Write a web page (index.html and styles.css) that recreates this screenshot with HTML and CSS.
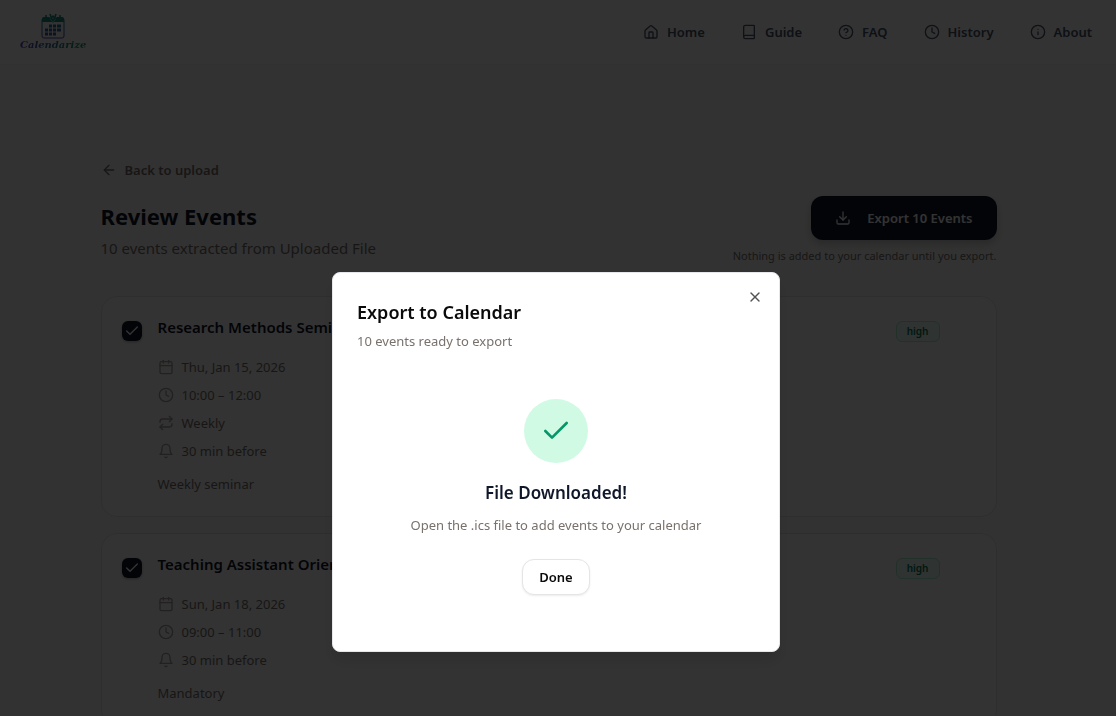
FILE: index.html
```html
<!DOCTYPE html>
<html lang="en">
<head>
  <meta charset="UTF-8" />
  <meta name="viewport" content="width=device-width, initial-scale=1.0"/>
  <title>Calendarize</title>
  <link rel="stylesheet" href="styles.css">
</head>
<body>
  <!-- ICONS -->
  <svg class="sprite" aria-hidden="true">
    <symbol id="home" viewBox="0 0 24 24"><path d="M3 10.5a2 2 0 0 1 .7-1.5l7-6a2 2 0 0 1 2.6 0l7 6a2 2 0 0 1 .7 1.500V19a2 2 0 0 1-2 2H5a2 2 0 0 1-2-2z"/><path d="M15 21v-8a1 1 0 0 0-1-1h-4a1 1 0 0 0-1 1v8"/></symbol>
    <symbol id="book" viewBox="0 0 24 24"><path d="M4 19.500v-15A2.500 2.500 0 0 1 6.500 2H19a1 1 0 0 1 1 1v18a1 1 0 0 1-1 1H6.500a1 1 0 0 1 0-5H20"/></symbol>
    <symbol id="help" viewBox="0 0 24 24"><circle cx="12" cy="12" r="10"/><path d="M9.090 9a3 3 0 0 1 5.830 1c0 2-3 3-3 3"/><path d="M12 17h.01"/></symbol>
    <symbol id="clock" viewBox="0 0 24 24"><circle cx="12" cy="12" r="10"/><path d="M12 6v6l4 2"/></symbol>
    <symbol id="info" viewBox="0 0 24 24"><circle cx="12" cy="12" r="10"/><path d="M12 16v-4"/><path d="M12 8h.01"/></symbol>
    <symbol id="arrow" viewBox="0 0 24 24"><path d="m12 19-7-7 7-7"/><path d="M19 12H5"/></symbol>
    <symbol id="download" viewBox="0 0 24 24"><path d="M12 15V3"/><path d="M21 15v4a2 2 0 0 1-2 2H5a2 2 0 0 1-2-2v-4"/><path d="m7 10 5 5 5-5"/></symbol>
    <symbol id="calendar" viewBox="0 0 24 24"><path d="M8 2v4"/><path d="M16 2v4"/><rect x="3" y="4" width="18" height="18" rx="2"/><path d="M3 10h18"/></symbol>
    <symbol id="repeat" viewBox="0 0 24 24"><path d="m17 2 4 4-4 4"/><path d="M3 11v-1a4 4 0 0 1 4-4h14"/><path d="m7 22-4-4 4-4"/><path d="M21 13v1a4 4 0 0 1-4 4H3"/></symbol>
    <symbol id="bell" viewBox="0 0 24 24"><path d="M6 8a6 6 0 0 1 12 0c0 7 3 9 3 9H3s3-2 3-9"/><path d="M10.300 21a1.940 1.940 0 0 0 3.400 0"/></symbol>
    <symbol id="check" viewBox="0 0 24 24"><path d="M20 6 9 17l-5-5"/></symbol>
    <symbol id="close" viewBox="0 0 24 24"><path d="M18 6 6 18"/><path d="m6 6 12 12"/></symbol>
  </svg>

  <header class="navbar">
    <a class="logo" href="#">
      <svg class="logo-mark" viewBox="0 0 24 26" aria-hidden="true">
        <defs>
          <linearGradient id="mark" gradientUnits="userSpaceOnUse" x1="0" y1="4" x2="0" y2="26">
            <stop offset="0" stop-color="#0d9488"/>
            <stop offset="1" stop-color="#4f46b5"/>
          </linearGradient>
        </defs>
        <rect x="1" y="5" width="22" height="20" rx="2" fill="none" stroke="url(#mark)"/>
        <path d="M1 9V6a2 2 0 0 1 2-2h5l4 6 4-6h5a2 2 0 0 1 2 2v3z" fill="#14907f"/>
        <path d="M5 2v4M19 2v4M9 1l1 3M15 1l-1 3M12 3l2 2-2 3-2-3z" fill="none" stroke="#14907f" stroke-width="1.500"/>
        <path d="M8 13h3M12 13h3M16 13h4M4 17h3M8 17h3M12 17h3M16 17h4M4 21h3M8 21h3M12 21h3" stroke="url(#mark)" stroke-width="3" fill="none"/>
      </svg>
      <span class="logo-text">Calendarize</span>
    </a>
    <nav class="nav-links">
      <a href="#"><svg class="icon"><use href="#home"/></svg>Home</a>
      <a href="#"><svg class="icon"><use href="#book"/></svg>Guide</a>
      <a href="#"><svg class="icon"><use href="#help"/></svg>FAQ</a>
      <a href="#"><svg class="icon"><use href="#clock"/></svg>History</a>
      <a href="#"><svg class="icon"><use href="#info"/></svg>About</a>
    </nav>
  </header>

  <main class="page">
    <div class="container">
      <button class="back"><svg class="icon"><use href="#arrow"/></svg>Back to upload</button>

      <div class="page-head">
        <div>
          <h1>Review Events</h1>
          <p class="subtitle">10 events extracted from Uploaded File</p>
        </div>
        <div class="export">
          <button class="export-btn"><svg class="icon"><use href="#download"/></svg>Export 10 Events</button>
          <p class="hint">Nothing is added to your calendar until you export.</p>
        </div>
      </div>

      <div class="events">
        <article class="card">
          <input type="checkbox" class="pick" id="event1" checked>
          <div class="card-body">
            <h3><label for="event1">Research Methods Seminar</label></h3>
            <ul class="details">
              <li><svg class="icon"><use href="#calendar"/></svg>Thu, Jan 15, 2026</li>
              <li><svg class="icon"><use href="#clock"/></svg>10:00 – 12:00</li>
              <li><svg class="icon"><use href="#repeat"/></svg>Weekly</li>
              <li><svg class="icon"><use href="#bell"/></svg>30 min before</li>
            </ul>
            <p class="note">Weekly seminar</p>
          </div>
          <span class="badge">high</span>
        </article>

        <article class="card">
          <input type="checkbox" class="pick" id="event2" checked>
          <div class="card-body">
            <h3><label for="event2">Teaching Assistant Orientation</label></h3>
            <ul class="details">
              <li><svg class="icon"><use href="#calendar"/></svg>Sun, Jan 18, 2026</li>
              <li><svg class="icon"><use href="#clock"/></svg>09:00 – 11:00</li>
              <li><svg class="icon"><use href="#bell"/></svg>30 min before</li>
            </ul>
            <p class="note">Mandatory</p>
          </div>
          <span class="badge">high</span>
        </article>
      </div>
    </div>
  </main>

  <div class="overlay">
    <div class="modal" role="dialog" aria-modal="true" aria-labelledby="modal-title">
      <div class="modal-head">
        <div>
          <h2 id="modal-title">Export to Calendar</h2>
          <p class="modal-text">10 events ready to export</p>
        </div>
        <button class="close" aria-label="Close"><svg class="icon"><use href="#close"/></svg></button>
      </div>
      <div class="success">
        <div class="success-icon"><svg class="icon"><use href="#check"/></svg></div>
        <h3>File Downloaded!</h3>
        <p class="modal-text">Open the .ics file to add events to your calendar</p>
        <button class="done">Done</button>
      </div>
    </div>
  </div>
</body>
</html>
```
FILE: styles.css
```css
* {
  margin: 0;
  padding: 0;
  box-sizing: border-box;
}

html, body {
  height: 100%;
  overflow: hidden;
}

body {
  font-family: 'Segoe UI', 'Noto Sans', 'Open Sans', sans-serif;
  font-size: 13px;
  line-height: 20px;
  background: #fafaf9;
  color: #78716c;
}

button {
  font: inherit;
  border: none;
  background: none;
  cursor: pointer;
}

a {
  color: inherit;
  text-decoration: none;
}

.sprite {
  display: none;
}

.icon {
  width: 16px;
  height: 16px;
  flex-shrink: 0;
  fill: none;
  stroke: currentColor;
  stroke-width: 2;
  stroke-linecap: round;
  stroke-linejoin: round;
}

/* NAVBAR */
.navbar {
  display: flex;
  align-items: center;
  justify-content: space-between;
  height: 65px;
  padding: 0 24px 0 20px;
  background: white;
  border-bottom: 1px solid #f5f5f4;
}

.logo {
  display: flex;
  flex-direction: column;
  align-items: center;
}

.logo-mark {
  width: 24px;
  height: 26px;
}

.logo-text {
  font-family: 'Brush Script MT', 'DejaVu Serif', serif;
  font-size: 10px;
  font-style: italic;
  font-weight: 700;
  line-height: 12px;
  background: linear-gradient(90deg, #5b3fc4, #2b7a99, #12a150);
  -webkit-background-clip: text;
  background-clip: text;
  color: transparent;
}

.nav-links {
  display: flex;
  gap: 36px;
  color: #475569;
  font-weight: 600;
}

.nav-links a {
  display: flex;
  align-items: center;
  gap: 8px;
}

/* PAGE */
.page {
  padding: 95px 19px 0 0;
}

.container {
  max-width: 896px;
  margin: 0 auto;
}

.back {
  display: flex;
  align-items: center;
  gap: 8px;
  color: #78716c;
  font-weight: 600;
}

.page-head {
  display: flex;
  justify-content: space-between;
  margin-top: 16px;
}

h1 {
  margin-top: 4px;
  font-size: 22px;
  line-height: 32px;
  color: #0f172a;
}

.subtitle {
  margin-top: 4px;
  font-size: 15px;
  line-height: 24px;
}

.export {
  display: flex;
  flex-direction: column;
  align-items: flex-end;
}

.export-btn {
  display: flex;
  align-items: center;
  gap: 16px;
  height: 44px;
  padding: 0 24px;
  border-radius: 12px;
  background: #0f172a;
  color: white;
  font-weight: 600;
  box-shadow: 0 4px 8px rgba(0,0,0,0.2);
}

.hint {
  margin-top: 8px;
  font-size: 11px;
  line-height: 16px;
}

/* EVENTS */
.events {
  display: flex;
  flex-direction: column;
  gap: 16px;
  margin-top: 32px;
}

.card {
  display: flex;
  align-items: flex-start;
  padding: 18px 56px 22px 20px;
  background: white;
  border: 1px solid #e7e5e4;
  border-radius: 16px;
}

.pick {
  appearance: none;
  width: 20px;
  height: 20px;
  margin: 6px 16px 0 0;
  border-radius: 6px;
  background: #0f172a url("data:image/svg+xml,%3Csvg xmlns='http://www.w3.org/2000/svg' viewBox='0 0 24 24' fill='none' stroke='white' stroke-width='2' stroke-linecap='round'%3E%3Cpath d='M20 6 9 17l-5-5'/%3E%3C/svg%3E") center / 16px no-repeat;
  box-shadow: 0 1px 3px rgba(0,0,0,0.3);
}

.card-body {
  flex: 1;
}

.card h3 {
  font-size: 15px;
  font-weight: 600;
  line-height: 24px;
  color: #0f172a;
}

.details {
  display: flex;
  flex-direction: column;
  gap: 8px;
  margin-top: 18px;
  list-style: none;
}

.details li {
  display: flex;
  align-items: center;
  gap: 8px;
}

.details .icon {
  color: #a8a29e;
}

.note {
  margin-top: 13px;
}

.badge {
  margin-top: 6px;
  padding: 0 10px;
  border: 1px solid #a7f3d0;
  border-radius: 6px;
  background: #ecfdf5;
  color: #047857;
  font-size: 10px;
  font-weight: 600;
  line-height: 19px;
}

/* MODAL */
.overlay {
  position: fixed;
  inset: 0;
  display: flex;
  align-items: center;
  justify-content: center;
  padding: 208px 4px 0 0;
  background: rgba(0,0,0,0.8);
}

.modal {
  width: 100%;
  max-width: 448px;
  padding: 24px;
  background: white;
  border: 1px solid #e5e7eb;
  border-radius: 8px;
  box-shadow: 0 10px 15px rgba(0,0,0,0.1);
}

.modal-head {
  display: flex;
  align-items: flex-start;
  justify-content: space-between;
}

.modal h2 {
  font-size: 18px;
  font-weight: 600;
  line-height: 30px;
  color: #0a0a0a;
}

.modal-text {
  margin-top: 4px;
}

.close {
  display: flex;
  margin: -8px -8px 0 0;
  color: #525252;
}

.success {
  display: flex;
  flex-direction: column;
  align-items: center;
  padding: 48px 0 32px;
}

.success-icon {
  display: flex;
  align-items: center;
  justify-content: center;
  width: 64px;
  height: 64px;
  border-radius: 50%;
  background: #d1fae5;
  color: #059669;
}

.success-icon .icon {
  width: 32px;
  height: 32px;
}

.success h3 {
  margin-top: 16px;
  font-size: 17px;
  font-weight: 600;
  line-height: 28px;
  color: #0f172a;
}

.success .modal-text {
  margin-top: 8px;
}

.done {
  height: 36px;
  margin-top: 24px;
  padding: 0 16px;
  border: 1px solid #e5e5e5;
  border-radius: 12px;
  background: white;
  color: #0a0a0a;
  font-weight: 600;
  box-shadow: 0 1px 2px rgba(0,0,0,0.08);
}
```
